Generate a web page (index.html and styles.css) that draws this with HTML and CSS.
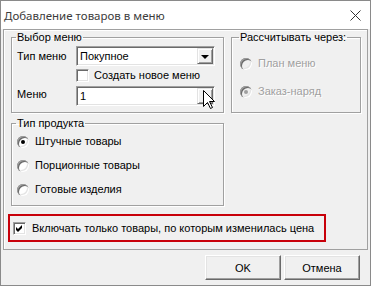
FILE: index.html
```html
<!DOCTYPE html>
<html lang="ru">
<head>
    <meta charset="UTF-8">
    <title>Добавление товаров в меню</title>
    <link rel="stylesheet" href="styles.css">
</head>
<body>
    <div class="window">
        <div class="titlebar">
            <span class="title">Добавление товаров в меню</span>
            <svg class="close" width="11" height="11" viewBox="0 0 11 11">
                <path d="M0.5 0.5 L10.5 10.5 M10.5 0.5 L0.5 10.5" stroke="#333" stroke-width="1" fill="none"/>
            </svg>
        </div>
        <div class="client">
            <div class="panel">
                <div class="top-row">
                    <fieldset class="group group-menu">
                        <legend>Выбор меню</legend>
                        <div class="form-grid">
                            <span class="lbl">Тип меню</span>
                            <div class="combo">
                                <span class="field-text">Покупное</span>
                                <span class="combo-btn"><i class="arrow"></i></span>
                            </div>
                            <span></span>
                            <label class="check">
                                <span class="box"></span>
                                <span>Создать новое меню</span>
                            </label>
                            <span class="lbl">Меню</span>
                            <div class="edit">
                                <span class="field-text">1</span>
                                <span class="edit-btn"></span>
                                <svg class="cursor" width="13" height="20" viewBox="0 0 13 20">
                                    <path d="M0.5 0.5 V16.5 L4.5 12.5 L7.5 18.5 L9.5 17.5 L6.5 11.5 H11.5 Z" fill="#fff" stroke="#000" stroke-width="1"/>
                                </svg>
                            </div>
                        </div>
                    </fieldset>
                    <fieldset class="group group-calc">
                        <legend>Рассчитывать через:</legend>
                        <div class="radio-list disabled">
                            <label class="option"><span class="radio"></span><span class="dis-text">План меню</span></label>
                            <label class="option"><span class="radio on"></span><span class="dis-text">Заказ-наряд</span></label>
                        </div>
                    </fieldset>
                </div>
                <fieldset class="group group-type">
                    <legend>Тип продукта</legend>
                    <div class="radio-list">
                        <label class="option"><span class="radio on"></span><span>Штучные товары</span></label>
                        <label class="option"><span class="radio"></span><span>Порционные товары</span></label>
                        <label class="option"><span class="radio"></span><span>Готовые изделия</span></label>
                    </div>
                </fieldset>
                <div class="highlight">
                    <span class="box checked">
                        <svg width="7" height="7" viewBox="0 0 7 7"><path d="M0 2 L2 4 L6 0 V3 L2 7 L0 5 Z" fill="#000"/></svg>
                    </span>
                    <span>Включать только товары, по которым изменилась цена</span>
                </div>
            </div>
            <div class="buttons">
                <button class="btn">OK</button>
                <button class="btn">Отмена</button>
            </div>
        </div>
    </div>
</body>
</html>
```

FILE: styles.css
```css
body {
    margin: 0;
    font-family: "Liberation Sans", Arial, sans-serif;
    font-size: 11px;
    line-height: 13px;
    color: #000;
}

.window {
    width: 371px;
    height: 286px;
    box-sizing: border-box;
    border: 1px solid #8a8a8a;
    background: #f0f0f0;
    display: flex;
    flex-direction: column;
}

.titlebar {
    height: 28px;
    flex: none;
    background: #fff;
    display: flex;
    align-items: center;
    justify-content: space-between;
    padding: 0 9px 0 3px;
}

.title {
    font-family: "Noto Sans", sans-serif;
    font-size: 11.5px;
    color: #3c3c3c;
}

.client {
    flex: 1;
    padding: 0 2px;
    display: flex;
    flex-direction: column;
}

.panel {
    border: 1px solid #a0a0a0;
    box-shadow: inset 1px 1px 0 #fff;
    padding: 1px 0 7px;
}

.top-row {
    display: flex;
    gap: 7px;
    margin-left: 7px;
}

.group {
    margin: 0;
    border: 1px solid #a0a0a0;
    box-shadow: inset 1px 1px 0 #fff, 1px 1px 0 #fff;
    padding: 2px 5px 6px;
    min-width: 0;
}

.group legend {
    padding: 0;
    margin-left: -1px;
    padding-left: 1px;
    padding-right: 1px;
}

.group-menu {
    width: 213px;
    box-sizing: border-box;
}

.group-calc {
    width: 130px;
    box-sizing: border-box;
    padding-left: 8px;
}

.form-grid {
    display: grid;
    grid-template-columns: 59px 139px;
    align-items: center;
}

.lbl {
    height: 20px;
    line-height: 20px;
}

.combo, .edit {
    position: relative;
    height: 20px;
    box-sizing: border-box;
    background: #fff;
    border: 1px solid;
    border-color: #a0a0a0 #fff #fff #a0a0a0;
    box-shadow: inset 1px 1px 0 #696969, inset -1px -1px 0 #e3e3e3;
    display: flex;
    align-items: center;
    justify-content: space-between;
}

.field-text {
    padding-left: 3px;
}

.combo-btn, .edit-btn {
    width: 16px;
    height: 16px;
    margin-right: 1px;
    box-sizing: border-box;
    background: #f0f0f0;
    border: 1px solid;
    border-color: #e3e3e3 #696969 #696969 #e3e3e3;
    box-shadow: inset 1px 1px 0 #fff, inset -1px -1px 0 #a0a0a0;
    display: flex;
    align-items: center;
    justify-content: center;
}

.arrow {
    width: 0;
    height: 0;
    border-left: 4px solid transparent;
    border-right: 4px solid transparent;
    border-top: 4px solid #000;
    margin-top: 1px;
}

.edit {
    margin-top: 4px;
}

.cursor {
    position: absolute;
    left: 126px;
    top: 3px;
}

.check {
    display: flex;
    align-items: center;
    gap: 5px;
    margin-top: 3px;
    height: 13px;
}

.box {
    width: 13px;
    height: 13px;
    flex: none;
    box-sizing: border-box;
    background: #fff;
    border: 1px solid;
    border-color: #a0a0a0 #fff #fff #a0a0a0;
    box-shadow: inset 1px 1px 0 #696969, inset -1px -1px 0 #e3e3e3;
    display: flex;
    align-items: center;
    justify-content: center;
}

.box svg {
    display: block;
}

.radio-list {
    display: flex;
    flex-direction: column;
}

.group-calc .radio-list {
    gap: 15px;
    margin-top: 11px;
}

.group-type {
    width: 213px;
    box-sizing: border-box;
    margin: 4px 0 0 7px;
    padding: 5px 5px 9px;
}

.group-type .radio-list {
    gap: 11px;
}

.option {
    display: flex;
    align-items: center;
    gap: 6px;
    height: 13px;
}

.radio {
    width: 12px;
    height: 12px;
    flex: none;
    border-radius: 50%;
    background: #fff;
    box-shadow: inset 1px 1px 0 #a0a0a0, inset 2px 2px 0 #696969, inset -1px -1px 0 #fff, inset -2px -2px 0 #e3e3e3;
    position: relative;
}

.radio.on::after {
    content: '';
    position: absolute;
    left: 4px;
    top: 4px;
    width: 4px;
    height: 4px;
    border-radius: 50%;
    background: #000;
}

.disabled .radio {
    background: #f0f0f0;
}

.disabled .radio.on::after {
    background: #a0a0a0;
}

.dis-text {
    color: #a0a0a0;
    text-shadow: 1px 1px 0 #fff;
}

.highlight {
    width: 318px;
    height: 28px;
    box-sizing: border-box;
    margin: 8px 0 0 4px;
    border: 2px solid #c8000a;
    padding-left: 3px;
    display: flex;
    align-items: center;
    gap: 6px;
}

.buttons {
    display: flex;
    justify-content: flex-end;
    gap: 3px;
    margin: 5px 8px 0 0;
}

.btn {
    width: 76px;
    height: 25px;
    font-family: "Liberation Sans", Arial, sans-serif;
    font-size: 11px;
    color: #000;
    background: #f0f0f0;
    border: 1px solid;
    border-color: #fff #696969 #696969 #fff;
    box-shadow: inset -1px -1px 0 #a0a0a0, inset 1px 1px 0 #e3e3e3;
    padding: 0;
}
```
